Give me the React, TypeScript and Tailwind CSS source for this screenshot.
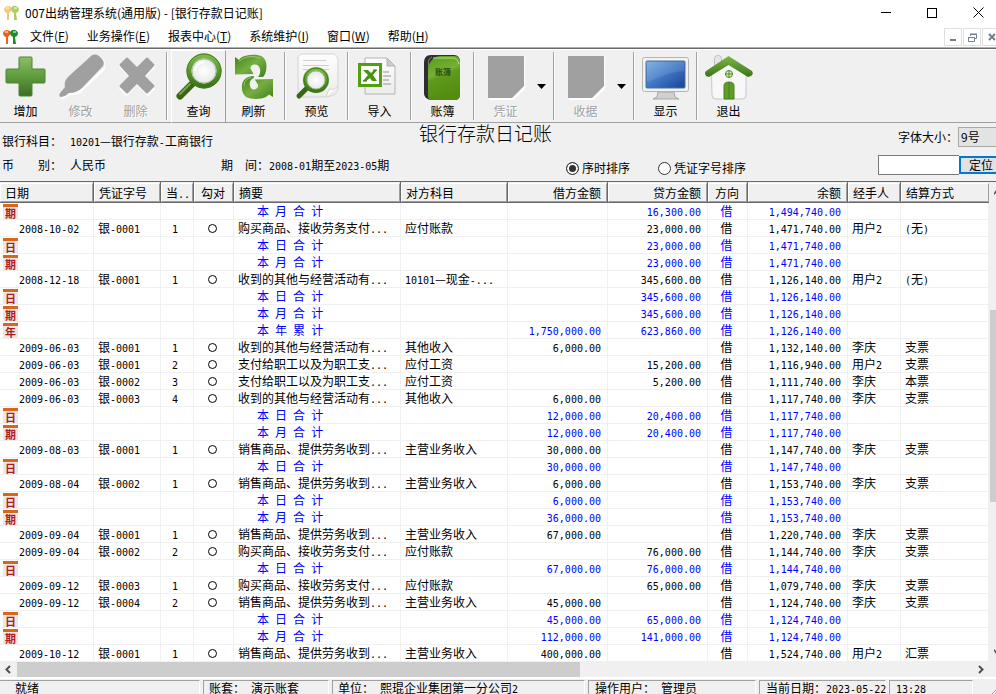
import React from "react";

const MONO = "font-['DejaVu_Sans_Mono',monospace] text-[10px] leading-none";
const GREEN = "#4f8f1a";

/** Sets the half-width runs of a string in a fixed-pitch face next to full-width CJK glyphs. */
function T({ children }: { children: string }) {
  return (
    <>
      {children.split(/([\x20-\x7e]+)/).map((part, i) =>
        i % 2 === 1 ? (
          <span key={i} className={MONO}>
            {part}
          </span>
        ) : (
          part
        ),
      )}
    </>
  );
}

function Gradients() {
  return (
    <svg width="0" height="0" className="absolute" aria-hidden="true">
      <defs>
        <linearGradient id="green" x1="0" y1="0" x2="0" y2="1">
          <stop offset="0" stopColor="#7db84a" />
          <stop offset="1" stopColor="#3c7416" />
        </linearGradient>
        <linearGradient id="leaf" x1="0" y1="0" x2="1" y2="1">
          <stop offset="0" stopColor="#3f7f14" />
          <stop offset="0.5" stopColor="#76ae42" />
          <stop offset="1" stopColor="#437f1a" />
        </linearGradient>
        <linearGradient id="plus" x1="0" y1="0" x2="0" y2="1">
          <stop offset="0" stopColor="#8cbf6a" />
          <stop offset="0.5" stopColor="#5f9c3c" />
          <stop offset="1" stopColor="#3c6f22" />
        </linearGradient>
        <linearGradient id="book" x1="0" y1="0" x2="0.3" y2="1">
          <stop offset="0" stopColor="#4f9c1c" />
          <stop offset="0.45" stopColor="#78b030" />
          <stop offset="0.55" stopColor="#5f9a1c" />
          <stop offset="1" stopColor="#548c12" />
        </linearGradient>
        <linearGradient id="screen" x1="0" y1="0" x2="1" y2="1">
          <stop offset="0" stopColor="#78aade" />
          <stop offset="0.5" stopColor="#3f78c4" />
          <stop offset="1" stopColor="#1c3f96" />
        </linearGradient>
        <linearGradient id="paper" x1="0" y1="0" x2="0" y2="1">
          <stop offset="0" stopColor="#fdfdfd" />
          <stop offset="1" stopColor="#ececec" />
        </linearGradient>
        <radialGradient id="lens">
          <stop offset="0" stopColor="#ffffff" />
          <stop offset="1" stopColor="#e2e6e6" />
        </radialGradient>
      </defs>
    </svg>
  );
}

function Icon({ children }: { children: React.ReactNode }) {
  return (
    <svg width="48" height="48" viewBox="0 0 48 48" aria-hidden="true">
      {children}
    </svg>
  );
}

const icons: Record<string, React.ReactNode> = {
  add: (
    <path
      d="M18 4h11q1 0 1 1v11h12q1 0 1 1v12q0 1-1 1H30v12q0 1-1 1H18q-1 0-1-1V30H5q-1 0-1-1V17q0-1 1-1h12V5q0-1 1-1z"
      fill="url(#plus)"
      stroke="#4d8530"
    />
  ),
  edit: (
    <>
      <path d="M4 45l4-1 4-3c5 1 10-1 13-4l21-20c3-3 3-5 1-8l-4-5" fill="none" stroke="#fff" strokeWidth="2" />
      <path d="M3 40l5-6c-1-5 1-8 4-11L33 4c3-3 6-3 9-1 4 3 6 7 4 10L26 34c-4 4-9 6-14 6l-4 3-4 1c-2 0-2-2-1-4z" fill="#a0a0a0" />
    </>
  ),
  remove: (
    <>
      <path d="M14 7l11 11L36 7l7 7-11 11 11 11-7 7-11-11-11 11-7-7 11-11L7 14z" fill="#fff" />
      <path d="M14 5q1-1 2 0l9 9 9-9q1-1 2 0l6 6q1 1 0 2l-9 10 9 9q1 1 0 2l-6 6q-1 1-2 0l-9-9-9 9q-1 1-2 0l-6-6q-1-1 0-2l9-9-9-10q-1-1 0-2z" fill="#a0a0a0" />
    </>
  ),
  search: (
    <>
      <path d="M15 29l3 3" stroke="#9fb48c" strokeWidth="5" />
      <path d="M5 43L17 31" stroke="#3a6612" strokeWidth="7" strokeLinecap="round" />
      <path d="M5 41L15 31" stroke="#74a650" strokeWidth="2" strokeLinecap="round" />
      <circle cx="29" cy="18" r="15" fill="url(#lens)" stroke="url(#green)" strokeWidth="5" />
      <circle cx="29" cy="18" r="17" fill="none" stroke="#3f7d14" />
      <circle cx="29" cy="18" r="12" fill="none" stroke="#a9bd98" />
      <path d="M20 18c0-5 4-9 9-9" stroke="#fff" strokeWidth="2" fill="none" />
    </>
  ),
  refresh: (
    <>
      <path
        d="M5 4l4 3c2-3 5-4 8-4.500 4-1 10-1 14 .5 4 2 5.500 6 5.500 10 0 5-1.500 9-3.500 11h-5c2-2 2.500-5 2-8-.5-3-3-5-6-4.500-3 .5-4.500 3-3 5l2.500 4.500L5 21.500z"
        fill="url(#leaf)"
      />
      <path
        d="M43 26v18l-4-2.500c-2 2.500-5 3.500-8 4-5 .8-11 .5-15-1.500-3.500-2.500-4.500-7-4-12 .5-5 5-9 11.800-9v2c-3 1-4.500 4-4 7 .5 3 2 4.500 4 4.500 3 0 5-2.500 4-5l-3-5z"
        fill="url(#leaf)"
      />
      <path d="M9 8.500c6-6 16-6 21-3" fill="none" stroke="#9ac878" />
      <path d="M14 33c0-5 3-7.500 7-8.500" fill="none" stroke="#9ac878" />
    </>
  ),
  preview: (
    <>
      <path d="M9 1h30c4 0 6 3 6 7v26c0 5-3 8-7 9l-5 1H9c-3 0-4-2-4-5V5c0-2 2-4 4-4z" fill="url(#paper)" stroke="#d4d4d4" />
      <path d="M10 7.500h23M10 12.500h26M10 16.500h26" stroke="#d0d0d0" />
      <path d="M33 44l3-8c3 1 6 0 9-3" fill="#fff" stroke="#d4d4d4" />
      <path d="M6 43l8-8" stroke="#3a6612" strokeWidth="5" strokeLinecap="round" />
      <circle cx="23" cy="27" r="11" fill="url(#lens)" stroke="url(#green)" strokeWidth="4" />
      <circle cx="23" cy="27" r="12" fill="none" stroke="#3f7d14" />
      <circle cx="23" cy="27" r="9" fill="none" stroke="#a9bd98" />
    </>
  ),
  excel: (
    <>
      <path d="M9 5h22l8 8v28H9z" fill="url(#paper)" stroke="#b4b4b4" />
      <path d="M31 5v8h8z" fill="#ccc" stroke="#b4b4b4" />
      <path d="M27 19h6M27 23h8M27 27h6M27 31h8" stroke="#c4c4c4" strokeWidth="2" />
      <rect x="3.500" y="11.500" width="21" height="21" fill="#fff" stroke="#51a012" strokeWidth="3" />
      <path d="M7 17h5l3 3 3-3h3l-4 5 4 6h-5l-2-3-4 3H7l5-6z" fill="#46950f" />
      <path d="M17 17h4M7 28h4" stroke="#2c6f08" />
    </>
  ),
  book: (
    <>
      <path d="M12 2h23c4 0 6 3 6 7v32c0 4-2 6-6 6H13c-5 0-8-3-8-7V10c0-5 2-8 7-8z" fill="#302c30" />
      <path d="M13 4c-4 2-4 6-3 9v29c0 2 2 4 4 4" fill="none" stroke="#8c8890" />
      <path d="M13 7c2-3 5-4 9-4h14c3 0 5 3 5 6v32c0 4-2 6-6 6H13c-2 0-4-1-4-4V15c0-3 2-6 4-8z" fill="url(#book)" />
      <path d="M14 5h21c3 1 4 3 5 6" fill="none" stroke="#b6dc8c" />
      <text x="24" y="22" textAnchor="middle" fontSize="8" fontWeight="bold" fill="#2a4a10" fontFamily="Noto Sans CJK SC, sans-serif">
        账簿
      </text>
    </>
  ),
  sheet: (
    <>
      <path d="M42 4v31L31 46H7" fill="none" stroke="#fff" strokeWidth="2" />
      <path d="M6 3h36v30L30 45H6z" fill="#a0a0a0" />
    </>
  ),
  monitor: (
    <>
      <path d="M16 39h16l1 5 4 2H11l4-2z" fill="#d0d0d0" stroke="#a8a8a8" />
      <rect x="0.5" y="4.5" width="46" height="34" rx="2" fill="#f2f2f2" stroke="#b4b4b4" />
      <rect x="4" y="8" width="39" height="27" rx="1" fill="url(#screen)" stroke="#4d6ea4" />
      <path d="M5 9h37v9C28 19 18 24 5 29z" fill="#fff" opacity="0.1" />
    </>
  ),
  house: (
    <>
      <rect x="9.500" y="2.500" width="7" height="14" rx="3" fill="#e6e6e6" stroke="#c0c0c0" />
      <path d="M6.500 20L24 7l17 13v22q0 4-4 4H11q-4 0-4-4z" fill="#f8f8f8" stroke="#c8c8c8" />
      <path d="M23.500 3L47 18q2 3-1 5l-3 1L23.500 12 4 24l-3-1q-2-3 0-5z" fill="url(#green)" />
      <circle cx="24" cy="21" r="3.500" fill="#dbeccd" stroke={GREEN} />
      <path d="M24 17v8M20 21h8" stroke={GREEN} />
      <path d="M19 46V33q0-4 5-4t5 4v13z" fill="#5f9c28" stroke="#47801a" />
      <path d="M24 29v17" stroke="#47801a" />
    </>
  ),
};

function ToolButton({ icon, label, disabled, raised }: { icon: string; label: string; disabled?: boolean; raised?: boolean }) {
  const frame = raised ? "border-l-white border-t-white border-r-[#a0a0a0] border-b-[#a0a0a0]" : "border-transparent";
  const ink = disabled ? "text-[#a0a0a0] [text-shadow:1px_1px_0_#fff]" : "text-black";
  return (
    <button type="button" disabled={disabled} className={`flex h-[73px] w-[55px] shrink-0 flex-col items-center border pt-[2px] ${frame} ${ink}`}>
      <Icon>{icons[icon]}</Icon>
      <span className="leading-5">{label}</span>
    </button>
  );
}

function Separator() {
  return (
    <div className="flex w-2 shrink-0 justify-center py-[2px]">
      <div className="w-[2px] border-l border-[#a0a0a0] bg-white" />
    </div>
  );
}

function DropArrow({ label }: { label: string }) {
  return (
    <button type="button" aria-label={label} className="flex w-[17px] shrink-0 items-center justify-center">
      <svg width="9" height="5" aria-hidden="true">
        <path d="M0 0h9L4.500 5z" fill="#000" />
      </svg>
    </button>
  );
}

const MENUS: [string, string][] = [
  ["文件", "F"],
  ["业务操作", "E"],
  ["报表中心", "T"],
  ["系统维护", "I"],
  ["窗口", "W"],
  ["帮助", "H"],
];

type Entry = {
  kind: "entry";
  date: string;
  voucher: string;
  seq: string;
  memo: string;
  account: string;
  debit: string;
  credit: string;
  balance: string;
  person: string;
  method: string;
};
type Total = { kind: "total"; mark: string; title: string; debit: string; credit: string; balance: string };

const entry = (
  date: string,
  voucher: string,
  seq: string,
  memo: string,
  account: string,
  debit: string,
  credit: string,
  balance: string,
  person: string,
  method: string,
): Entry => ({ kind: "entry", date, voucher, seq, memo, account, debit, credit, balance, person, method });

const day = (debit: string, credit: string, balance: string): Total => ({ kind: "total", mark: "日", title: "本 日 合 计", debit, credit, balance });
const month = (debit: string, credit: string, balance: string): Total => ({ kind: "total", mark: "期", title: "本 月 合 计", debit, credit, balance });
const year = (debit: string, credit: string, balance: string): Total => ({ kind: "total", mark: "年", title: "本 年 累 计", debit, credit, balance });

const BUY = "购买商品、接收劳务支付...";
const SELL = "销售商品、提供劳务收到...";
const OTHER = "收到的其他与经营活动有...";
const WAGE = "支付给职工以及为职工支...";

const ROWS: (Entry | Total)[] = [
  month("", "16,300.00", "1,494,740.00"),
  entry("2008-10-02", "银-0001", "1", BUY, "应付账款", "", "23,000.00", "1,471,740.00", "用户2", "(无)"),
  day("", "23,000.00", "1,471,740.00"),
  month("", "23,000.00", "1,471,740.00"),
  entry("2008-12-18", "银-0001", "1", OTHER, "10101—现金-...", "", "345,600.00", "1,126,140.00", "用户2", "(无)"),
  day("", "345,600.00", "1,126,140.00"),
  month("", "345,600.00", "1,126,140.00"),
  year("1,750,000.00", "623,860.00", "1,126,140.00"),
  entry("2009-06-03", "银-0001", "1", OTHER, "其他收入", "6,000.00", "", "1,132,140.00", "李庆", "支票"),
  entry("2009-06-03", "银-0001", "2", WAGE, "应付工资", "", "15,200.00", "1,116,940.00", "用户2", "支票"),
  entry("2009-06-03", "银-0002", "3", WAGE, "应付工资", "", "5,200.00", "1,111,740.00", "李庆", "本票"),
  entry("2009-06-03", "银-0003", "4", OTHER, "其他收入", "6,000.00", "", "1,117,740.00", "李庆", "支票"),
  day("12,000.00", "20,400.00", "1,117,740.00"),
  month("12,000.00", "20,400.00", "1,117,740.00"),
  entry("2009-08-03", "银-0001", "1", SELL, "主营业务收入", "30,000.00", "", "1,147,740.00", "李庆", "支票"),
  day("30,000.00", "", "1,147,740.00"),
  entry("2009-08-04", "银-0002", "1", SELL, "主营业务收入", "6,000.00", "", "1,153,740.00", "李庆", "支票"),
  day("6,000.00", "", "1,153,740.00"),
  month("36,000.00", "", "1,153,740.00"),
  entry("2009-09-04", "银-0001", "1", SELL, "主营业务收入", "67,000.00", "", "1,220,740.00", "李庆", "支票"),
  entry("2009-09-04", "银-0002", "2", BUY, "应付账款", "", "76,000.00", "1,144,740.00", "李庆", "支票"),
  day("67,000.00", "76,000.00", "1,144,740.00"),
  entry("2009-09-12", "银-0003", "1", BUY, "应付账款", "", "65,000.00", "1,079,740.00", "李庆", "支票"),
  entry("2009-09-12", "银-0004", "2", SELL, "主营业务收入", "45,000.00", "", "1,124,740.00", "李庆", "支票"),
  day("45,000.00", "65,000.00", "1,124,740.00"),
  month("112,000.00", "141,000.00", "1,124,740.00"),
  entry("2009-10-12", "银-0001", "1", SELL, "主营业务收入", "400,000.00", "", "1,524,740.00", "用户2", "汇票"),
];

const COLUMNS: { title: string; width: string; align: string }[] = [
  { title: "日期", width: "w-[94px]", align: "text-left" },
  { title: "凭证字号", width: "w-[67px]", align: "text-left" },
  { title: "当..", width: "w-[33px]", align: "text-left" },
  { title: "勾对", width: "w-[40px]", align: "text-center" },
  { title: "摘要", width: "w-[167px]", align: "text-left" },
  { title: "对方科目", width: "w-[107px]", align: "text-left" },
  { title: "借方金额", width: "w-[100px]", align: "text-right" },
  { title: "贷方金额", width: "w-[100px]", align: "text-right" },
  { title: "方向", width: "w-[40px]", align: "text-center" },
  { title: "余额", width: "w-[100px]", align: "text-right" },
  { title: "经手人", width: "w-[53px]", align: "text-left" },
  { title: "结算方式", width: "w-auto", align: "text-left" },
];

function Cell({ children, className = "" }: { children?: React.ReactNode; className?: string }) {
  return <td className={`overflow-hidden border-r border-b border-[#f0f0f0] p-0 whitespace-nowrap ${className}`}>{children}</td>;
}

function Mark({ text }: { text: string }) {
  return (
    <span className="ml-[3px] flex h-[15px] w-[15px] items-center justify-center border-t-[3px] border-[#d9661a] bg-[#ece6e4] text-[11px] leading-3 font-bold text-[#b01c1c]">
      {text}
    </span>
  );
}

function LedgerRow({ row }: { row: Entry | Total }) {
  const isEntry = row.kind === "entry";
  return (
    <tr className={`h-[17px] leading-4 ${isEntry ? "text-black" : "text-[#0000ff]"}`}>
      <Cell className={isEntry ? "pl-[19px]" : ""}>{isEntry ? <T>{row.date}</T> : <Mark text={row.mark} />}</Cell>
      <Cell className="pl-1">{isEntry && <T>{row.voucher}</T>}</Cell>
      <Cell className="pr-1 text-center">{isEntry && <T>{row.seq}</T>}</Cell>
      <Cell className="pr-[2px]">
        {isEntry && (
          <svg width="9" height="9" className="mx-auto" aria-hidden="true">
            <circle cx="4.500" cy="4.500" r="4" fill="none" stroke="#000" />
          </svg>
        )}
      </Cell>
      <Cell className={isEntry ? "pl-1" : "pl-[23px]"}>
        <T>{isEntry ? row.memo : row.title}</T>
      </Cell>
      <Cell className="pl-1">{isEntry && <T>{row.account}</T>}</Cell>
      <Cell className="pr-[6px] text-right">
        <T>{row.debit}</T>
      </Cell>
      <Cell className="pr-[6px] text-right">
        <T>{row.credit}</T>
      </Cell>
      <Cell className="pr-[2px] text-center">借</Cell>
      <Cell className="pr-[6px] text-right">
        <T>{row.balance}</T>
      </Cell>
      <Cell className="pl-1">{isEntry && <T>{row.person}</T>}</Cell>
      <Cell className="pl-1">{isEntry && <T>{row.method}</T>}</Cell>
    </tr>
  );
}

function Ledger() {
  return (
    <table className="w-full table-fixed border-separate border-spacing-0 bg-white">
      <thead>
        <tr className="h-[22px]">
          {COLUMNS.map((c) => (
            <th
              key={c.title}
              scope="col"
              className={`border-t border-r border-b border-[#696969] bg-[#f0f0f0] p-0 font-normal last:border-r-0 ${c.width} ${c.align}`}
            >
              <div className="h-[19px] overflow-hidden border-t border-r border-b border-l border-t-white border-r-[#a0a0a0] border-b-[#a0a0a0] border-l-white pr-[5px] pl-1 leading-[17px] whitespace-nowrap">
                <T>{c.title}</T>
              </div>
            </th>
          ))}
        </tr>
      </thead>
      <tbody>
        {ROWS.map((r, i) => (
          <LedgerRow key={i} row={r} />
        ))}
      </tbody>
    </table>
  );
}

function Logo({ left, right }: { left: string; right: string }) {
  return (
    <svg width="17" height="17" viewBox="0 0 17 17" aria-hidden="true">
      <path d="M1 5q1-3 4-3t4 3q-1 3-2 3l-1 1v7H4V9Q1 8 1 5z" fill={left} />
      <path d="M8 4q2-3 5-2t3 4q-1 3-3 3l1 7h-3V9Q8 8 8 4z" fill={right} />
      <path d="M3 4h3M11 4h3" stroke="#fff" />
    </svg>
  );
}

function StatusPane({ className, children }: { className: string; children: string }) {
  return (
    <div className={`h-[14px] border-t border-r border-l border-t-[#a0a0a0] border-r-white border-l-[#a0a0a0] leading-[13px] whitespace-nowrap ${className}`}>
      <T>{children}</T>
    </div>
  );
}

export default function App() {
  return (
    <div className="flex h-screen w-full flex-col overflow-hidden bg-[#f0f0f0] font-['Noto_Sans_CJK_SC',sans-serif] text-[12px] text-black">
      <Gradients />
      <header className="flex h-[25px] shrink-0 items-center bg-white pl-[3px]">
        <Logo left="#f6c878" right="#a9d060" />
        <h1 className="pl-[5px] whitespace-nowrap">007出纳管理系统(通用版) - [银行存款日记账]</h1>
        <div className="ml-auto flex gap-[10px]">
          <button type="button" aria-label="最小化" className="flex h-6 w-9 items-center justify-center">
            <span className="h-px w-[10px] bg-black" />
          </button>
          <button type="button" aria-label="最大化" className="flex h-6 w-9 items-center justify-center">
            <span className="h-[10px] w-[10px] border border-black" />
          </button>
          <button type="button" aria-label="关闭" className="flex h-6 w-9 items-center justify-center">
            <svg width="11" height="11" aria-hidden="true">
              <path d="M0.500 0.500l10 10M10.500 0.500l-10 10" stroke="#000" />
            </svg>
          </button>
        </div>
      </header>

      <nav className="flex h-[22px] shrink-0 items-center bg-white pl-[2px]">
        <Logo left="#e8641c" right="#1f8a2c" />
        <div className="flex gap-[18px] pl-[11px]">
          {MENUS.map(([name, key]) => (
            <button key={key} type="button" className="whitespace-nowrap">
              {name}(<u className="underline-offset-1">{key}</u>)
            </button>
          ))}
        </div>
        <div className="ml-auto flex gap-px pt-[2px]">
          <button type="button" aria-label="最小化子窗口" className="flex h-[18px] w-[18px] items-end justify-center border border-[#e0e0e0] pb-1">
            <span className="h-[2px] w-[6px] bg-[#708090]" />
          </button>
          <button type="button" aria-label="还原子窗口" className="flex h-[18px] w-[18px] items-center justify-center border border-[#e0e0e0]">
            <svg width="9" height="9" aria-hidden="true">
              <path d="M2.500 3V1.500h6v4H7M2 1h7M0.500 4.500h6v4h-6zM0 4.500h7" fill="none" stroke="#708090" />
            </svg>
          </button>
          <button type="button" aria-label="关闭子窗口" className="flex h-[18px] w-[14px] items-center justify-end overflow-hidden border border-r-0 border-[#e0e0e0]">
            <svg width="8" height="8" aria-hidden="true">
              <path d="M1 1l6 6M7 1L1 7" stroke="#708090" strokeWidth="2" />
            </svg>
          </button>
        </div>
      </nav>

      <div className="h-[2px] shrink-0 border-t border-b border-t-[#b0b0b0] border-b-[#696969]" />

      <div className="flex h-[74px] shrink-0 border-t border-b border-t-white border-b-[#a0a0a0]">
        <div className="-ml-[2px] flex">
          <ToolButton icon="add" label="增加" />
          <ToolButton icon="edit" label="修改" disabled />
          <ToolButton icon="remove" label="删除" disabled />
          <Separator />
          <ToolButton icon="search" label="查询" raised />
          <ToolButton icon="refresh" label="刷新" />
          <Separator />
          <ToolButton icon="preview" label="预览" />
          <Separator />
          <ToolButton icon="excel" label="导入" />
          <Separator />
          <ToolButton icon="book" label="账簿" />
          <Separator />
          <ToolButton icon="sheet" label="凭证" disabled />
          <DropArrow label="凭证选项" />
          <Separator />
          <ToolButton icon="sheet" label="收据" disabled />
          <DropArrow label="收据选项" />
          <Separator />
          <ToolButton icon="monitor" label="显示" />
          <Separator />
          <ToolButton icon="house" label="退出" />
        </div>
      </div>

      <section className="flex h-[58px] shrink-0 whitespace-nowrap">
        <div className="flex w-[419px] shrink-0 flex-col gap-2 pt-[10px] pl-[2px] leading-4">
          <div className="flex">
            <span className="w-[68px]">银行科目：</span>
            <span>
              <T>10201—银行存款-工商银行</T>
            </span>
          </div>
          <div className="flex">
            <span className="w-[68px]">币　　别：</span>
            <span className="w-[151px]">人民币</span>
            <span className="w-[48px]">期　间：</span>
            <span>
              <T>2008-01期至2023-05期</T>
            </span>
          </div>
        </div>
        <h2 className="w-[147px] shrink-0 text-[19px] leading-5 font-light">银行存款日记账</h2>
        <div className="flex min-w-0 flex-1 flex-col gap-2 pt-1">
          <div className="flex h-5 items-center justify-end">
            <label htmlFor="size">字体大小：</label>
            <select id="size" className="h-5 w-[38px] appearance-none border border-r-0 border-[#a8a8a8] bg-[#e3e3e3] pl-[2px] text-[12px]">
              <option>9号</option>
            </select>
          </div>
          <div className="flex h-5 items-center">
            {[
              ["序时排序", "w-[92px]"],
              ["凭证字号排序", "w-[220px]"],
            ].map(([name, width], i) => (
              <label key={name} className={`flex shrink-0 items-center gap-[3px] pt-[6px] ${width}`}>
                <input
                  type="radio"
                  name="order"
                  defaultChecked={i === 0}
                  className="h-[13px] w-[13px] appearance-none rounded-full border border-[#333] bg-white checked:bg-[#333] checked:shadow-[inset_0_0_0_2px_#fff]"
                />
                {name}
              </label>
            ))}
            <input aria-label="定位内容" type="text" className="h-5 min-w-0 flex-1 border border-r-0 border-[#7a7a7a] bg-white px-1" />
            <button type="button" className="h-[18px] w-[37px] shrink-0 border-2 border-r-0 border-[#0078d7] bg-[#e1e1e1] pl-2 text-left leading-[14px]">
              定位
            </button>
          </div>
        </div>
      </section>

      <main className="flex min-h-0 flex-1 overflow-hidden">
        <div className="min-w-0 flex-1 overflow-hidden">
          <Ledger />
        </div>
        <div className="flex w-[7px] shrink-0 flex-col border-t border-[#696969] bg-[#f0f0f0] pl-px">
          <div className="flex h-[128px] justify-end pt-2">
            <svg width="2" height="5" aria-hidden="true">
              <path d="M2 0v3L0 5V3z" fill="#505050" />
            </svg>
          </div>
          <div className="h-[192px] bg-[#cdcdcd]" />
          <div className="flex flex-1 items-end justify-end pb-[7px]">
            <svg width="2" height="5" aria-hidden="true">
              <path d="M0 0l2 2v3L0 2z" fill="#505050" />
            </svg>
          </div>
        </div>
      </main>

      <div className="flex h-4 shrink-0 items-center bg-[#f0f0f0]">
        <svg width="17" height="9" aria-hidden="true">
          <path d="M10 1L6.500 4.500 10 8" fill="none" stroke="#505050" strokeWidth="2" />
        </svg>
        <div className="flex h-[15px] flex-1">
          <div className="w-[59%] bg-[#cdcdcd]" />
        </div>
        <svg width="24" height="9" aria-hidden="true">
          <path d="M7 1l3.500 3.500L7 8" fill="none" stroke="#505050" strokeWidth="2" />
        </svg>
      </div>

      <footer className="flex h-[17px] shrink-0 gap-[3px] border-t-2 border-white pt-px">
        <StatusPane className="w-[200px] border-l-0 pl-[15px]">就绪</StatusPane>
        <StatusPane className="w-[126px] pl-[5px]">账套： 演示账套</StatusPane>
        <StatusPane className="w-[253px] pl-[5px]">单位： 熙琨企业集团第一分公司2</StatusPane>
        <StatusPane className="w-[168px] pl-[6px]">操作用户： 管理员</StatusPane>
        <StatusPane className="w-[127px] pl-[6px]">当前日期：2023-05-22</StatusPane>
        <StatusPane className="w-[84px] pl-[6px]">13:28</StatusPane>
        <svg width="4" height="14" className="ml-auto" aria-hidden="true">
          <path d="M0 14l4-4M3 14l1-1" stroke="#a0a0a0" />
        </svg>
      </footer>
    </div>
  );
}
